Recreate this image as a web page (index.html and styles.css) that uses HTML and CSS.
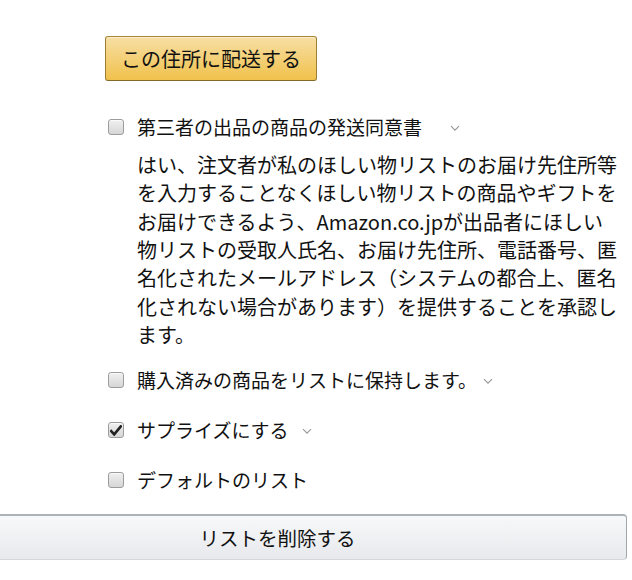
FILE: index.html
```html
<!DOCTYPE html>
<html lang="ja">
<head>
<meta charset="utf-8">
<title>リスト設定</title>
<link rel="stylesheet" href="styles.css">
</head>
<body>
<main class="page">
  <div class="actions">
    <button class="btn-primary" type="button">この住所に配送する</button>
  </div>
  <ul class="options">
    <li class="option option--expanded">
      <div class="option-row">
        <span class="checkbox"></span>
        <span class="option-label">第三者の出品の商品の発送同意書</span>
        <svg class="chevron chevron--wide" width="10" height="7" viewBox="0 0 10 7"><polyline points="1,1.2 5,5.2 9,1.2" fill="none" stroke="#9a9a9a" stroke-width="1.2"/></svg>
      </div>
      <p class="option-desc">はい、注文者が私のほしい物リストのお届け先住所等を入力することなくほしい物リストの商品やギフトをお届けできるよう、Amazon.co.jpが出品者にほしい物リストの受取人氏名、お届け先住所、電話番号、匿名化されたメールアドレス（システムの都合上、匿名化されない場合があります）を提供することを承認します。</p>
    </li>
    <li class="option">
      <div class="option-row">
        <span class="checkbox"></span>
        <span class="option-label">購入済みの商品をリストに保持します。</span>
        <svg class="chevron chevron--tight" width="10" height="7" viewBox="0 0 10 7"><polyline points="1,1.2 5,5.2 9,1.2" fill="none" stroke="#9a9a9a" stroke-width="1.2"/></svg>
      </div>
    </li>
    <li class="option">
      <div class="option-row">
        <span class="checkbox checkbox--checked">
          <svg width="12" height="11" viewBox="0 0 12 11"><path d="M1.2 6.2 L4.2 9.4 L10.8 1.4" fill="none" stroke="#222" stroke-width="2.6" stroke-linejoin="miter" stroke-linecap="square"/></svg>
        </span>
        <span class="option-label">サプライズにする</span>
        <svg class="chevron" width="10" height="7" viewBox="0 0 10 7"><polyline points="1,1.2 5,5.2 9,1.2" fill="none" stroke="#9a9a9a" stroke-width="1.2"/></svg>
      </div>
    </li>
    <li class="option">
      <div class="option-row">
        <span class="checkbox"></span>
        <span class="option-label">デフォルトのリスト</span>
      </div>
    </li>
  </ul>
  <div class="footer">
    <button class="btn-secondary" type="button">リストを削除する</button>
  </div>
</main>
</body>
</html>
```

FILE: styles.css
```css
* {
  box-sizing: border-box;
}

html, body {
  margin: 0;
  padding: 0;
  background: #ffffff;
  overflow: hidden;
}

body {
  font-family: "Noto Sans CJK JP", "Noto Sans", sans-serif;
  color: #111111;
}

.page {
  display: flex;
  flex-direction: column;
}

.actions {
  padding: 36px 0 0 105px;
  display: flex;
}

.btn-primary {
  width: 212px;
  height: 45px;
  font-family: inherit;
  font-size: 20px;
  color: #111111;
  background: linear-gradient(to bottom, #f7dfa5, #f0c14b);
  border: 1px solid;
  border-color: #a88734 #9c7e31 #846a29;
  border-radius: 3px;
  box-shadow: inset 0 1px 0 rgba(255, 255, 255, 0.45);
  padding: 0;
  line-height: 1;
}

.options {
  list-style: none;
  margin: 32px 0 0 0;
  padding: 0 0 0 108px;
  display: flex;
  flex-direction: column;
}

.option + .option {
  margin-top: 22px;
}

.option--expanded + .option {
  margin-top: 17px;
}

.option-row {
  height: 28px;
  display: flex;
  align-items: center;
}

.checkbox {
  width: 16px;
  height: 16px;
  flex: none;
  border: 1px solid #9c9c9c;
  border-radius: 3px;
  background: linear-gradient(to bottom, #f0f0f0, #d6d6d6);
  box-shadow: inset 0 1px 0 rgba(255, 255, 255, 0.7);
  display: flex;
  align-items: center;
  justify-content: center;
}

.option-label {
  margin-left: 13px;
  font-size: 19px;
  line-height: 28px;
  color: #111111;
}

.chevron {
  flex: none;
  margin-left: 13px;
  margin-top: 2px;
}

.chevron--wide {
  margin-left: 28px;
}

.chevron--tight {
  margin-left: 6px;
}

.option-desc {
  margin: 10px 0 0 29px;
  width: 484px;
  font-size: 20px;
  line-height: 28.33px;
  color: #111111;
  line-break: strict;
}

.footer {
  margin: 20px 5px 0 -72px;
  display: flex;
}

.btn-secondary {
  flex: 1;
  height: 46px;
  font-family: inherit;
  font-size: 19.5px;
  color: #111111;
  background: linear-gradient(to bottom, #f7f8fa, #e7e9ec);
  border: 1px solid;
  border-top: 2px solid #adb1b8;
  border-color: #adb1b8 #a2a6ac #d5d7da;
  border-radius: 4px;
  padding: 0;
  line-height: 1;
}
```
